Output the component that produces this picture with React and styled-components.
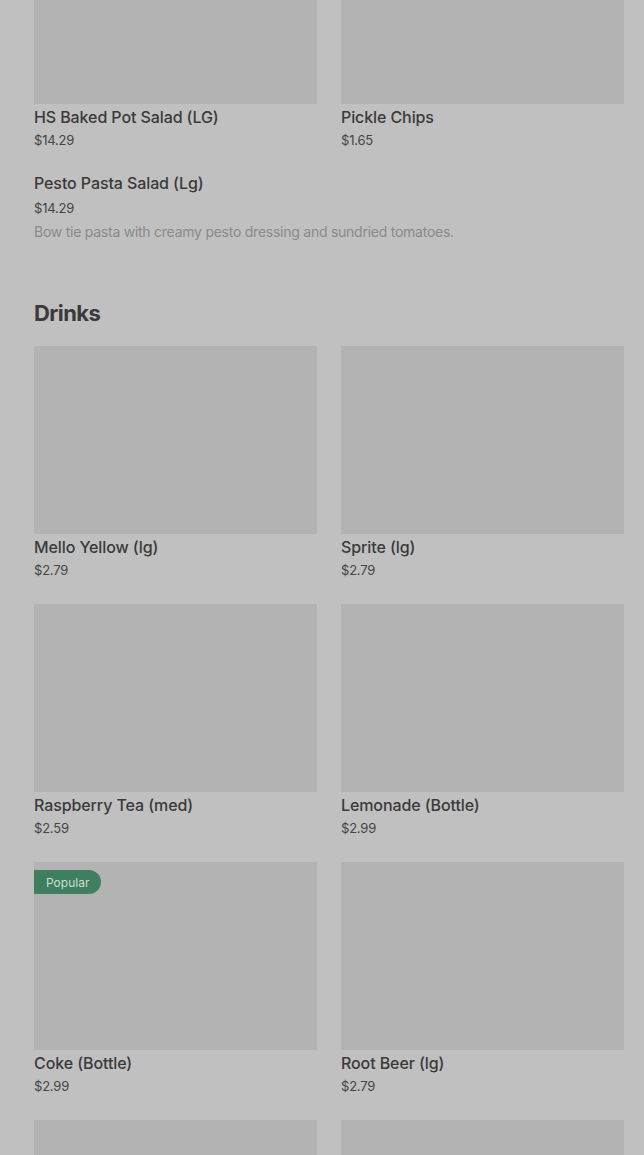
import React from 'react';
import styled, { createGlobalStyle } from 'styled-components';

const GlobalStyle = createGlobalStyle`
  html, body {
    margin: 0;
    padding: 0;
    background: #c0c0c0;
  }
  body {
    font-family: Inter, "Noto Sans", sans-serif;
    -webkit-font-smoothing: antialiased;
  }
`;

const topItems = [
  { name: 'HS Baked Pot Salad (LG)', price: '$14.29' },
  { name: 'Pickle Chips', price: '$1.65' },
];

const drinks = [
  { name: 'Mello Yellow (lg)', price: '$2.79' },
  { name: 'Sprite (lg)', price: '$2.79' },
  { name: 'Raspberry Tea (med)', price: '$2.59' },
  { name: 'Lemonade (Bottle)', price: '$2.99' },
  { name: 'Coke (Bottle)', price: '$2.99', popular: true },
  { name: 'Root Beer (lg)', price: '$2.79' },
  { name: '', price: '' },
  { name: '', price: '' },
];

export default function App() {
  return (
    <>
      <GlobalStyle />
      <Page>
        <Grid $offset>
          {topItems.map((item) => (
            <Card key={item.name}>
              <Photo />
              <Name>{item.name}</Name>
              <Price>{item.price}</Price>
            </Card>
          ))}
        </Grid>

        <PlainItem>
          <Name>Pesto Pasta Salad (Lg)</Name>
          <Price $spaced>$14.29</Price>
          <Description>
            Bow tie pasta with creamy pesto dressing and sundried tomatoes.
          </Description>
        </PlainItem>

        <Section>
          <Heading>Drinks</Heading>
          <Grid>
            {drinks.map((item, i) => (
              <Card key={i}>
                <Photo>{item.popular && <Badge>Popular</Badge>}</Photo>
                {item.name && <Name>{item.name}</Name>}
                {item.price && <Price>{item.price}</Price>}
              </Card>
            ))}
          </Grid>
        </Section>
      </Page>
    </>
  );
}

const Page = styled.div`
  padding: 0 20px 0 34px;
  height: 1155px;
  overflow: hidden;
`;

const Grid = styled.div`
  display: grid;
  grid-template-columns: 283px 283px;
  column-gap: 24px;
  row-gap: 24px;
  margin-top: ${(p) => (p.$offset ? '-84px' : '0')};
`;

const Card = styled.div`
  display: flex;
  flex-direction: column;
`;

const Photo = styled.div`
  position: relative;
  height: 188px;
  background: #b3b3b3;
  margin-bottom: 3px;
`;

const Badge = styled.span`
  position: absolute;
  top: 8px;
  left: 0;
  height: 24px;
  padding: 0 12px;
  display: flex;
  align-items: center;
  background: #3f7f5f;
  color: #c9ddd1;
  font-size: 12px;
  border-radius: 0 12px 12px 0;
`;

const Name = styled.div`
  font-size: 16px;
  line-height: 20px;
  font-weight: 500;
  letter-spacing: -0.1px;
  color: #3a3a3a;
`;

const Price = styled.div`
  font-size: 13px;
  line-height: 20px;
  letter-spacing: -0.2px;
  color: #454545;
  margin-top: ${(p) => (p.$spaced ? '5px' : '3px')};
`;

const PlainItem = styled.div`
  margin-top: 23px;
  display: flex;
  flex-direction: column;
`;

const Description = styled.div`
  font-size: 14px;
  line-height: 20px;
  letter-spacing: -0.25px;
  color: #8a8a8a;
  margin-top: 4px;
`;

const Section = styled.section`
  margin-top: 57px;
`;

const Heading = styled.h2`
  margin: 0 0 19px;
  font-size: 22px;
  line-height: 28px;
  font-weight: 700;
  letter-spacing: -0.6px;
  color: #3a3a3a;
`;
